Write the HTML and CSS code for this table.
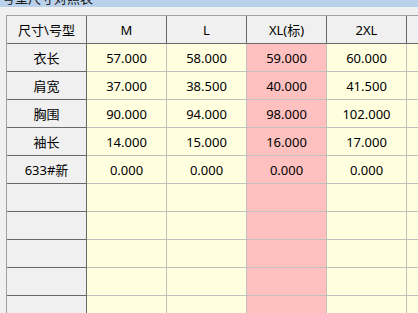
FILE: index.html
```html
<!DOCTYPE html>
<html lang="zh">
<head>
<meta charset="utf-8">
<link rel="stylesheet" href="styles.css">
</head>
<body>
<div class="titlebar"><span class="title">号型尺寸对照表</span></div>
<div class="wrap">
  <div class="grid">
    <div class="cell corner">尺寸\号型</div>
    <div class="cell hd">M</div>
    <div class="cell hd">L</div>
    <div class="cell hd">XL(标)</div>
    <div class="cell hd">2XL</div>
    <div class="cell hd last"></div>

    <div class="cell rh">衣长</div>
    <div class="cell y">57.000</div>
    <div class="cell y">58.000</div>
    <div class="cell p">59.000</div>
    <div class="cell y">60.000</div>
    <div class="cell y"></div>

    <div class="cell rh">肩宽</div>
    <div class="cell y">37.000</div>
    <div class="cell y">38.500</div>
    <div class="cell p">40.000</div>
    <div class="cell y">41.500</div>
    <div class="cell y"></div>

    <div class="cell rh">胸围</div>
    <div class="cell y">90.000</div>
    <div class="cell y">94.000</div>
    <div class="cell p">98.000</div>
    <div class="cell y">102.000</div>
    <div class="cell y"></div>

    <div class="cell rh">袖长</div>
    <div class="cell y">14.000</div>
    <div class="cell y">15.000</div>
    <div class="cell p">16.000</div>
    <div class="cell y">17.000</div>
    <div class="cell y"></div>

    <div class="cell rh">633#新</div>
    <div class="cell y">0.000</div>
    <div class="cell y">0.000</div>
    <div class="cell p">0.000</div>
    <div class="cell y">0.000</div>
    <div class="cell y"></div>

    <div class="cell rh"></div><div class="cell y"></div><div class="cell y"></div><div class="cell p"></div><div class="cell y"></div><div class="cell y"></div>
    <div class="cell rh"></div><div class="cell y"></div><div class="cell y"></div><div class="cell p"></div><div class="cell y"></div><div class="cell y"></div>
    <div class="cell rh"></div><div class="cell y"></div><div class="cell y"></div><div class="cell p"></div><div class="cell y"></div><div class="cell y"></div>
    <div class="cell rh"></div><div class="cell y"></div><div class="cell y"></div><div class="cell p"></div><div class="cell y"></div><div class="cell y"></div>
    <div class="cell rh"></div><div class="cell y"></div><div class="cell y"></div><div class="cell p"></div><div class="cell y"></div><div class="cell y"></div>
  </div>
</div>
</body>
</html>
```

FILE: styles.css
```css
html, body {
  margin: 0;
  padding: 0;
  width: 418px;
  height: 313px;
  overflow: hidden;
  background: #f0f0f0;
  font-family: "Noto Sans", "Noto Sans CJK SC", sans-serif;
  font-size: 13px;
  color: #000;
}
.titlebar {
  height: 7px;
  background: #b9d1ea;
  overflow: hidden;
}
.title {
  display: block;
  margin-top: -10px;
  padding-left: 2px;
  font-size: 13px;
  line-height: 16px;
  color: #1a1a1a;
}
.wrap {
  padding: 8px 0 0 6px;
}
.grid {
  display: grid;
  grid-template-columns: repeat(6, 80px);
  grid-auto-rows: 28px;
  width: max-content;
  border-left: 1px solid #a0a0a0;
  border-top: 1px solid #a0a0a0;
}
.cell {
  box-sizing: border-box;
  display: flex;
  align-items: center;
  justify-content: center;
  border-right: 1px solid #c0c0c0;
  border-bottom: 1px solid #c0c0c0;
  white-space: nowrap;
}
.corner, .hd, .rh {
  background: #f0f0f0;
  border-right-color: #696969;
  border-bottom-color: #696969;
}
.y { background: #ffffe0; }
.p { background: #ffc0c0; }
```
